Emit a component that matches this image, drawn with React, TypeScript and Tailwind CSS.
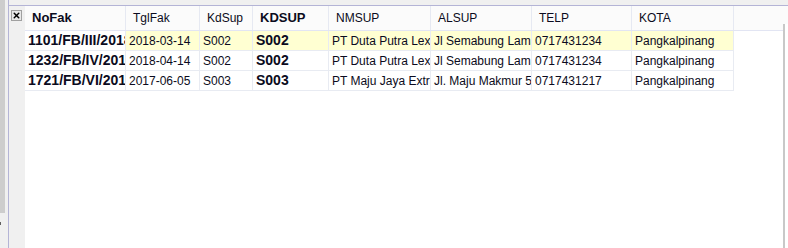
import { X } from 'lucide-react'

type Row = {
  noFak: string
  tglFak: string
  kdSup: string
  kdsup: string
  nmsup: string
  alsup: string
  telp: string
  kota: string
}

const COLS = [
  { key: 'noFak', title: 'NoFak', w: 'w-[101px]', boldHead: true, boldCell: true },
  { key: 'tglFak', title: 'TglFak', w: 'w-[74px]' },
  { key: 'kdSup', title: 'KdSup', w: 'w-[53px]' },
  { key: 'kdsup', title: 'KDSUP', w: 'w-[76px]', boldHead: true, boldCell: true },
  { key: 'nmsup', title: 'NMSUP', w: 'w-[102px]' },
  { key: 'alsup', title: 'ALSUP', w: 'w-[101px]' },
  { key: 'telp', title: 'TELP', w: 'w-[100px]' },
  { key: 'kota', title: 'KOTA', w: 'w-[102px]' },
] as const

const ROWS: Row[] = [
  { noFak: '1101/FB/III/2018', tglFak: '2018-03-14', kdSup: 'S002', kdsup: 'S002', nmsup: 'PT Duta Putra Lexindo', alsup: 'Jl Semabung Lama No. 12', telp: '0717431234', kota: 'Pangkalpinang' },
  { noFak: '1232/FB/IV/2018', tglFak: '2018-04-14', kdSup: 'S002', kdsup: 'S002', nmsup: 'PT Duta Putra Lexindo', alsup: 'Jl Semabung Lama No. 12', telp: '0717431234', kota: 'Pangkalpinang' },
  { noFak: '1721/FB/VI/2017', tglFak: '2017-06-05', kdSup: 'S003', kdsup: 'S003', nmsup: 'PT Maju Jaya Extra', alsup: 'Jl. Maju Makmur 5', telp: '0717431217', kota: 'Pangkalpinang' },
]

export default function App() {
  return (
    <div className="w-[788px] h-[248px] flex bg-[#f0f0f0] text-[#0b0b20] overflow-hidden" style={{ fontFamily: '"Liberation Sans", Arial, sans-serif' }}>
      {/* outer scroll strip */}
      <div className="w-[5px] flex flex-col">
        <div className="h-[213px] bg-[#cdcdcd]" />
        <div className="flex-1 relative">
          <div className="absolute left-0 top-[9px] w-[1px] h-[3px] bg-[#606060]" />
        </div>
      </div>
      <div className="w-[3px]" />

      {/* grid frame */}
      <div className="flex-1 flex flex-col min-w-0 border-l border-[#b4b4d6]">
        <div className="h-[5px]" />
        <div className="flex-1 flex border-t border-[#b4b4d6] min-h-0">
          {/* row header column */}
          <div className="w-[16px] shrink-0 bg-[#f0f0f0] pt-[4px] pl-[2px]">
            <div className="w-[11px] h-[11px] bg-[#e8e8e8] border border-[#a0a0a0] flex items-center justify-center">
              <X className="w-[9px] h-[9px] text-black" strokeWidth={4} />
            </div>
          </div>

          {/* table area */}
          <div className="flex-1 bg-white flex flex-col min-w-0">
            <div className="h-[25px] flex bg-[#fbfbfb] border-b border-[#e2e5f3] shrink-0">
              {COLS.map((c) => (
                <div
                  key={c.key}
                  className={`${c.w} shrink-0 border-r border-[#e6e9f2] flex items-center px-[7px] whitespace-nowrap overflow-hidden ${'boldHead' in c && c.boldHead ? 'font-bold text-[13px]' : 'text-[12px]'}`}
                >
                  {c.title}
                </div>
              ))}
              <div className="flex-1" />
            </div>

            {ROWS.map((r, i) => (
              <div key={r.noFak} className="h-[20px] flex shrink-0">
                {COLS.map((c) => {
                  const bold = 'boldCell' in c && c.boldCell
                  const highlight = i === 0 && c.key !== 'noFak'
                  return (
                    <div
                      key={c.key}
                      className={`${c.w} shrink-0 border-r border-b border-[#e8ebf2] flex items-center px-[3px] whitespace-nowrap overflow-hidden ${bold ? 'font-bold text-[14px]' : 'text-[12px]'} ${highlight ? 'bg-[#ffffd2]' : ''}`}
                    >
                      {r[c.key]}
                    </div>
                  )
                })}
              </div>
            ))}
            <div className="flex-1" />
          </div>

          {/* vertical scrollbar edge */}
          <div className="w-[5px] shrink-0 flex flex-col bg-white">
            <div className="h-[18px] bg-[#fbfbfb]" />
            <div className="flex-1 w-[2px] bg-[#c8c8c8]" />
          </div>
        </div>
      </div>
    </div>
  )
}
